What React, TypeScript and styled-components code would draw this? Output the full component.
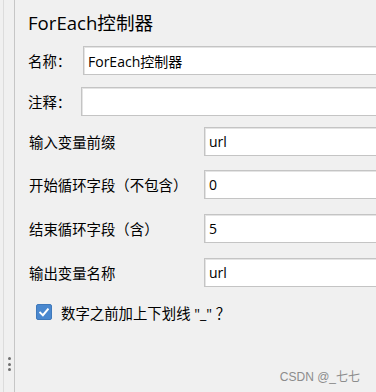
import React from "react";
import styled, { createGlobalStyle } from "styled-components";

const GlobalStyle = createGlobalStyle`
  html, body {
    margin: 0;
    padding: 0;
    background: #f0f0f0;
    overflow: hidden;
  }
  body {
    font-family: "Open Sans", "Noto Sans CJK SC", sans-serif;
    color: #000;
  }
`;

const Page = styled.div`
  display: flex;
  width: 376px;
  height: 392px;
  background: #f0f0f0;
  position: relative;
  overflow: hidden;
`;

const Splitter = styled.div`
  box-sizing: border-box;
  margin-left: 3px;
  width: 12px;
  border-left: 1px solid #dcdcdc;
  border-right: 1px solid #c6c6c6;
  display: flex;
  flex-direction: column;
  align-items: center;
  justify-content: flex-end;
  gap: 2.5px;
  padding-bottom: 21px;
`;

const Dot = styled.span`
  width: 3px;
  height: 3px;
  border-radius: 50%;
  background: #6f6f6f;
`;

const Main = styled.div`
  flex: 1;
  min-width: 0;
  padding-left: 13px;
  display: flex;
  flex-direction: column;
`;

const Title = styled.div`
  margin-top: 11px;
  height: 24px;
  line-height: 24px;
  font-size: 18.6px;
  white-space: nowrap;
`;

const Row = styled.div<{ $top: number }>`
  display: flex;
  align-items: center;
  height: 29px;
  margin-top: ${(p) => p.$top}px;
`;

const Label = styled.div<{ $width: number; $indent?: number }>`
  width: ${(p) => p.$width}px;
  flex: none;
  box-sizing: border-box;
  padding-left: ${(p) => p.$indent ?? 0}px;
  font-size: 14.4px;
  white-space: nowrap;
`;

const Field = styled.div`
  flex: 1;
  align-self: stretch;
  box-sizing: border-box;
  background: #fff;
  border: 1px solid #c4c4c4;
  border-right: none;
  box-shadow: inset 1px 1px 0 #e4e4e4;
  padding-left: 4px;
  display: flex;
  align-items: center;
  font-size: 14px;
  white-space: nowrap;
`;

const CheckRow = styled.label`
  display: flex;
  align-items: center;
  margin-top: 17px;
  padding-left: 8px;
  height: 16px;
  gap: 9px;
  font-size: 14.4px;
  white-space: nowrap;
`;

const Box = styled.span`
  width: 16px;
  height: 16px;
  box-sizing: border-box;
  border-radius: 2px;
  background: #4a88cf;
  border: 1px solid #3f79bb;
  display: flex;
  align-items: center;
  justify-content: center;
`;

const Watermark = styled.div`
  position: absolute;
  right: 16px;
  bottom: 8px;
  font-family: "Liberation Sans", "Noto Sans CJK SC", sans-serif;
  font-size: 12px;
  color: #8c8c8c;
`;

export default function App() {
  return (
    <>
      <GlobalStyle />
      <Page>
        <Splitter>
          <Dot />
          <Dot />
          <Dot />
        </Splitter>
        <Main>
          <Title>ForEach控制器</Title>
          <Row $top={11}>
            <Label $width={55}>名称：</Label>
            <Field>ForEach控制器</Field>
          </Row>
          <Row $top={12}>
            <Label $width={53}>注释：</Label>
            <Field />
          </Row>
          <Row $top={11}>
            <Label $width={176} $indent={1}>输入变量前缀</Label>
            <Field>url</Field>
          </Row>
          <Row $top={14}>
            <Label $width={176} $indent={1}>开始循环字段（不包含）</Label>
            <Field>0</Field>
          </Row>
          <Row $top={15}>
            <Label $width={176} $indent={1}>结束循环字段（含）</Label>
            <Field>5</Field>
          </Row>
          <Row $top={15}>
            <Label $width={176} $indent={1}>输出变量名称</Label>
            <Field>url</Field>
          </Row>
          <CheckRow>
            <Box>
              <svg width="10" height="9" viewBox="0 0 10 9">
                <path
                  d="M1.2 4.6 L3.9 7.2 L8.8 1.4"
                  fill="none"
                  stroke="#fff"
                  strokeWidth="2"
                  strokeLinecap="square"
                />
              </svg>
            </Box>
            <span>数字之前加上下划线 "_" ？</span>
          </CheckRow>
        </Main>
        <Watermark>CSDN @_七七</Watermark>
      </Page>
    </>
  );
}
